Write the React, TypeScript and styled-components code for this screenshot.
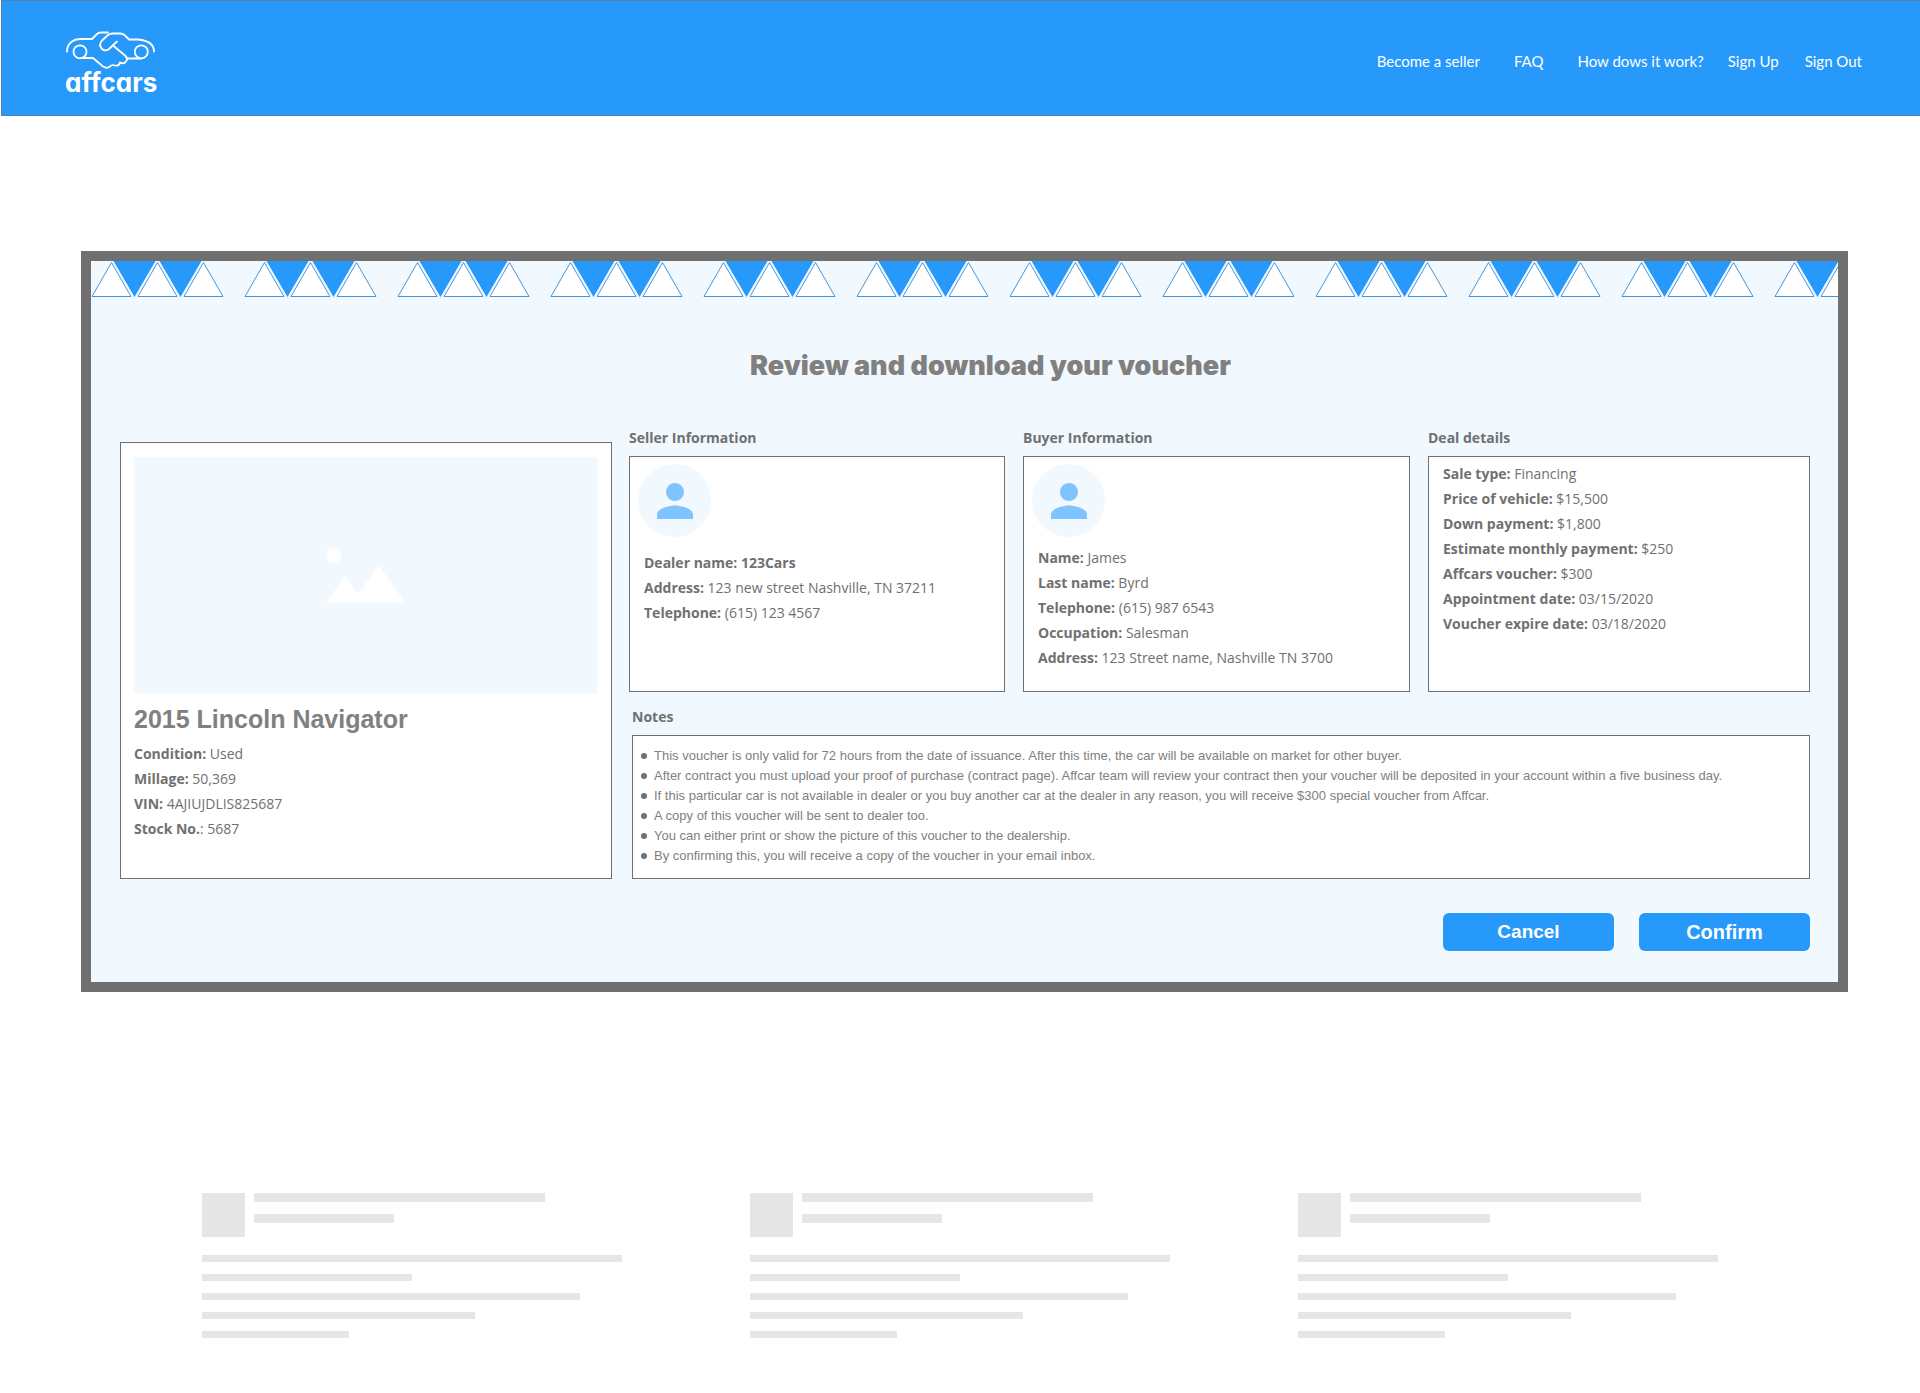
import React from "react";
import styled, { createGlobalStyle, css } from "styled-components";

const blue = "#2699fb";
const pale = "#f1f9ff";
const grey = "#707070";
const softGrey = "#808080";
const arial = `"Liberation Sans", Arial, sans-serif`;
const humanist = `"Open Sans", "Noto Sans", sans-serif`;

const GlobalStyle = createGlobalStyle`
  *, *::before, *::after { box-sizing: border-box; }
  body { margin: 0; background: #fff; color: ${grey}; font-family: ${humanist}; }
  h1, h2, p, ul, dl, dd { margin: 0; padding: 0; }
`;

const Header = styled.header`
  display: flex;
  justify-content: space-between;
  align-items: center;
  margin-left: 1px;
  height: 116px;
  padding: 0 58px 0 63px;
  background: ${blue};
  border: 1px solid #5480a8;
  border-right: 0;
`;

const Brand = styled.a`
  display: flex;
  flex-direction: column;
  align-items: center;
  margin-top: 11px;
  color: #fff;
  text-decoration: none;
`;

const BrandName = styled.span`
  font: 700 26px/28px Inter, sans-serif;
  font-feature-settings: "cv11";
`;

const Nav = styled.nav`
  display: flex;
  gap: 24px;
  margin-top: 5px;
`;

const NavGroup = styled.div<{ $gap: number }>`
  display: flex;
  gap: ${(p) => p.$gap}px;
`;

const NavLink = styled.a`
  color: #fff;
  font: 400 15px/20px Lato, sans-serif;
  text-decoration: none;
`;

const Voucher = styled.main`
  margin: 135px 72px 0 81px;
  border: 10px solid ${grey};
  background: ${pale};
`;

const Bunting = styled.svg`
  display: block;
  width: 100%;
  height: 36px;
`;

const Title = styled.h1`
  padding: 53px 0 0 52px;
  color: ${softGrey};
  font: 900 27px/32px Inter, sans-serif;
  text-align: center;
`;

const Content = styled.div`
  display: grid;
  grid-template-columns: 492fr 1181fr;
  gap: 17px;
  padding: 47px 28px 0 29px;
`;

const panel = css`
  background: #fff;
  border: 1px solid ${grey};
`;

const Vehicle = styled.section`
  ${panel}
  margin-top: 13px;
  padding: 14px 14px 0 13px;
`;

const Photo = styled.div`
  display: flex;
  align-items: center;
  justify-content: center;
  height: 236px;
  background: ${pale};
`;

const VehicleName = styled.h2`
  margin: 12px 0 8px;
  color: ${softGrey};
  font: 700 25px/28px ${arial};
`;

const Right = styled.div`
  display: flex;
  flex-direction: column;
`;

const Columns = styled.div`
  display: grid;
  grid-template-columns: 376fr 387fr 382fr;
  gap: 18px;
`;

const Column = styled.section`
  display: flex;
  flex-direction: column;
`;

const Heading = styled.h2`
  padding-bottom: 9px;
  font: 700 14px/18px ${humanist};
`;

const Box = styled.div<{ $top: number }>`
  ${panel}
  height: 236px;
  padding: ${(p) => p.$top}px 14px 0;
`;

const Avatar = styled.div`
  display: flex;
  align-items: center;
  justify-content: center;
  width: 73px;
  height: 73px;
  margin-left: -6px;
  border-radius: 50%;
  background: ${pale};
`;

const Facts = styled.dl<{ $top?: number }>`
  margin-top: ${(p) => p.$top ?? 0}px;
  font-size: 14px;
  line-height: 25px;
`;

const Fact = styled.div`
  height: 25px;
`;

const Term = styled.dt`
  display: inline;
  font-weight: 700;
`;

const Value = styled.dd<{ $strong?: boolean }>`
  display: inline;
  font-weight: ${(p) => (p.$strong ? 700 : 400)};
`;

const Notes = styled.section`
  margin: 16px 0 0 3px;
`;

const NoteList = styled.ul`
  ${panel}
  height: 144px;
  padding: 10px 8px;
  list-style: none;
`;

const Note = styled.li`
  display: flex;
  align-items: center;
  gap: 7px;
  color: ${softGrey};
  font: 400 13px/20px ${arial};

  &::before {
    content: "";
    width: 6px;
    height: 6px;
    border-radius: 50%;
    background: ${grey};
  }
`;

const Actions = styled.div`
  display: flex;
  justify-content: flex-end;
  gap: 25px;
  padding: 34px 28px 31px;
`;

const Button = styled.button<{ $size: number }>`
  width: 171px;
  height: 38px;
  padding: 0;
  border: 0;
  border-radius: 6px;
  background: ${blue};
  color: #fff;
  font: 700 ${(p) => p.$size}px/38px ${arial};
`;

const Footer = styled.footer`
  display: grid;
  grid-template-columns: repeat(3, 1fr);
  gap: 128px;
  padding: 201px 202px 55px;
`;

const Lead = styled.div`
  display: flex;
  gap: 9px;
  margin-bottom: 18px;
`;

const Thumb = styled.div`
  width: 43px;
  height: 44px;
  background: #e6e6e6;
`;

const Stack = styled.div`
  display: flex;
  flex: 1;
  flex-direction: column;
  gap: 12px;
`;

const Bar = styled.div<{ $width: number; $tall?: boolean }>`
  width: ${(p) => p.$width}%;
  height: ${(p) => (p.$tall ? 9 : 7)}px;
  background: #e6e6e6;
`;

type FactRow = { term: string; value: string; strong?: boolean };

const vehicle: FactRow[] = [
  { term: "Condition:", value: " Used" },
  { term: "Millage:", value: " 50,369" },
  { term: "VIN:", value: " 4AJIUJDLIS825687" },
  { term: "Stock No.", value: ": 5687" },
];
const seller: FactRow[] = [
  { term: "Dealer name:", value: " 123Cars", strong: true },
  { term: "Address:", value: " 123 new street Nashville, TN 37211" },
  { term: "Telephone:", value: " (615) 123 4567" },
];
const buyer: FactRow[] = [
  { term: "Name:", value: " James" },
  { term: "Last name:", value: " Byrd" },
  { term: "Telephone:", value: " (615) 987 6543" },
  { term: "Occupation:", value: " Salesman" },
  { term: "Address:", value: " 123 Street name, Nashville TN 3700" },
];
const deal: FactRow[] = [
  { term: "Sale type:", value: " Financing" },
  { term: "Price of vehicle:", value: " $15,500" },
  { term: "Down payment:", value: " $1,800" },
  { term: "Estimate monthly payment:", value: " $250" },
  { term: "Affcars voucher:", value: " $300" },
  { term: "Appointment date:", value: " 03/15/2020" },
  { term: "Voucher expire date:", value: " 03/18/2020" },
];
const notes = [
  "This voucher is only valid for 72 hours from the date of issuance. After this time, the car will be available on market for other buyer.",
  "After contract you must upload your proof of purchase (contract page). Affcar team will review your contract then your voucher will be deposited in your account within a five business day.",
  "If this particular car is not available in dealer or you buy another car at the dealer in any reason, you will receive $300 special voucher from Affcar.",
  "A copy of this voucher will be sent to dealer too.",
  "You can either print or show the picture of this voucher to the dealership.",
  "By confirming this, you will receive a copy of the voucher in your email inbox.",
];

const FactList = ({ rows, top }: { rows: FactRow[]; top?: number }) => (
  <Facts $top={top}>
    {rows.map((r) => (
      <Fact key={r.term}>
        <Term>{r.term}</Term>
        <Value $strong={r.strong}>{r.value}</Value>
      </Fact>
    ))}
  </Facts>
);

const Person = () => (
  <Avatar>
    <svg width="54" height="54" viewBox="0 0 24 24" fill="#7fc4ff" aria-hidden="true">
      <path d="M12 12c2.21 0 4-1.79 4-4s-1.79-4-4-4-4 1.79-4 4 1.79 4 4 4zm0 2c-2.67 0-8 1.34-8 4v2h16v-2c0-2.66-5.33-4-8-4z" />
    </svg>
  </Avatar>
);

const HandshakeCar = () => (
  <svg width="90" height="38" viewBox="66 30.5 90 38" fill="none" stroke="#fff" strokeWidth="1.8" strokeLinecap="round" strokeLinejoin="round" aria-hidden="true">
    <path d="M67 51C67 43 73 38.500 81 38.500H92L97 33.500Q98.500 32 101 32H108" />
    <path d="M117 41L109 48.500Q105 51.500 101.500 48Q98.500 44 102 40L108 34.500Q110 33 113 33H120Q123 33 125 35L129 39H138C148 40 154 44 154 51" />
    <path d="M113 45L125 55Q129 59 125 62Q123 63.500 120 62Q119 66 115 65Q111 64 110 66Q107 68.500 103 66L93 57.500H81M127 58H141" />
    <circle cx="80" cy="51.300" r="6.500" />
    <circle cx="141.300" cy="51.300" r="6.500" />
  </svg>
);

export default function App() {
  return (
    <>
      <GlobalStyle />
      <Header>
        <Brand href="#" aria-label="affcars">
          <HandshakeCar />
          <BrandName>affcars</BrandName>
        </Brand>
        <Nav>
          <NavGroup $gap={34}>
            <NavLink href="#seller">Become a seller</NavLink>
            <NavLink href="#faq">FAQ</NavLink>
            <NavLink href="#how">How dows it work?</NavLink>
          </NavGroup>
          <NavGroup $gap={26}>
            <NavLink href="#signup">Sign Up</NavLink>
            <NavLink href="#signout">Sign Out</NavLink>
          </NavGroup>
        </Nav>
      </Header>

      <Voucher>
        <Bunting aria-hidden="true">
          <defs>
            <pattern id="flags" width="153" height="36" patternUnits="userSpaceOnUse">
              <path d="M22.500 0H64.500L43.500 36ZM68.500 0H110.500L89.500 36Z" fill={blue} />
              <path d="M1 35.500L20.500 1.500L40 35.500ZM47 35.500L66.500 1.500L86 35.500ZM93 35.500L112.500 1.500L132 35.500Z" fill="#fff" stroke="#4496dc" />
            </pattern>
          </defs>
          <rect width="100%" height="36" fill="url(#flags)" />
        </Bunting>
        <Title>Review and download your voucher</Title>

        <Content>
          <Vehicle>
            <Photo>
              <svg width="79" height="55" viewBox="0 0 79 55" fill="#fff" aria-hidden="true">
                <circle cx="7.500" cy="7.500" r="7.500" />
                <path d="M0 55L19 27.500L32 46L53 17L79 55Z" />
              </svg>
            </Photo>
            <VehicleName>2015 Lincoln Navigator</VehicleName>
            <FactList rows={vehicle} />
          </Vehicle>

          <Right>
            <Columns>
              <Column>
                <Heading>Seller Information</Heading>
                <Box $top={7}>
                  <Person />
                  <FactList rows={seller} top={13} />
                </Box>
              </Column>
              <Column>
                <Heading>Buyer Information</Heading>
                <Box $top={7}>
                  <Person />
                  <FactList rows={buyer} top={8} />
                </Box>
              </Column>
              <Column>
                <Heading>Deal details</Heading>
                <Box $top={4}>
                  <FactList rows={deal} />
                </Box>
              </Column>
            </Columns>
            <Notes>
              <Heading>Notes</Heading>
              <NoteList>
                {notes.map((n) => (
                  <Note key={n}>{n}</Note>
                ))}
              </NoteList>
            </Notes>
          </Right>
        </Content>

        <Actions>
          <Button type="button" $size={19}>Cancel</Button>
          <Button type="button" $size={20}>Confirm</Button>
        </Actions>
      </Voucher>

      <Footer aria-hidden="true">
        {[0, 1, 2].map((i) => (
          <div key={i}>
            <Lead>
              <Thumb />
              <Stack>
                <Bar $width={79} $tall />
                <Bar $width={38} $tall />
              </Stack>
            </Lead>
            <Stack>
              {[100, 50, 90, 65, 35].map((w) => (
                <Bar key={w} $width={w} />
              ))}
            </Stack>
          </div>
        ))}
      </Footer>
    </>
  );
}
